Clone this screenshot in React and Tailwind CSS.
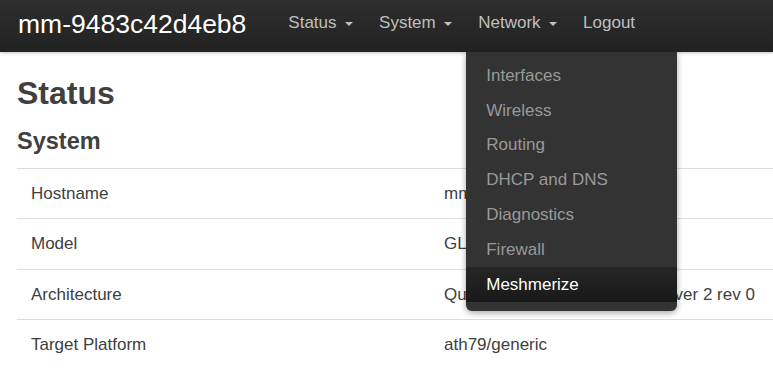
const font = { fontFamily: '"Liberation Sans", Arial, sans-serif' };

const navItems = [
  { label: "Status", caret: true },
  { label: "System", caret: true },
  { label: "Network", caret: true, open: true },
  { label: "Logout", caret: false },
];

const networkMenu = [
  "Interfaces",
  "Wireless",
  "Routing",
  "DHCP and DNS",
  "Diagnostics",
  "Firewall",
  "Meshmerize",
];

const rows = [
  ["Hostname", "mm-9483c42d4eb8"],
  ["Model", "GL.iNet GL-AR300M"],
  ["Architecture", "Qualcomm Atheros QCA956X ver 2 rev 0"],
  ["Target Platform", "ath79/generic"],
];

function Caret() {
  return (
    <span className="ml-[8px] mt-[3px] inline-block h-0 w-0 border-x-[4.5px] border-t-[4px] border-x-transparent border-t-[#bfbfbf]" />
  );
}

function Dropdown() {
  return (
    <div className="absolute left-0 top-full z-10 w-[211px] rounded-b-[6px] bg-[#333] pb-[9px] pt-[6px] shadow-[0_2px_6px_rgba(0,0,0,0.35)]">
      {networkMenu.map((item) => {
        const active = item === "Meshmerize";
        return (
          <div
            key={item}
            className={
              active
                ? "flex h-[34.9px] items-center bg-gradient-to-b from-[#262626] to-[#191919] px-[20px] text-white"
                : "flex h-[34.9px] items-center px-[20px] text-[#999]"
            }
          >
            {item}
          </div>
        );
      })}
    </div>
  );
}

export default function App() {
  return (
    <div
      className="h-[368px] w-[773px] overflow-hidden bg-white text-[17px] text-[#404040]"
      style={font}
    >
      <div className="flex h-[52px] items-center bg-gradient-to-b from-[#2e2e2e] to-[#222] shadow-[0_1px_3px_rgba(0,0,0,0.25)]">
        <div className="mb-[4px] ml-[18px] mr-[30px] text-[26.5px] leading-none text-white">
          mm-9483c42d4eb8
        </div>
        <div className="flex h-full">
          {navItems.map((n) => (
            <div
              key={n.label}
              className={
                n.caret
                  ? "relative flex h-full items-center pb-[7px] pl-[12px] pr-[14.5px] text-[#bfbfbf]"
                  : "relative flex h-full items-center pb-[7px] pl-[12px] pr-[12px] text-[#bfbfbf]"
              }
            >
              <span>{n.label}</span>
              {n.caret && <Caret />}
              {n.open && <Dropdown />}
            </div>
          ))}
        </div>
      </div>

      <div className="pl-[17px]">
        <h1 className="mt-[23px] text-[32px] font-bold leading-[36px]">Status</h1>
        <h3 className="mt-[16px] text-[23.5px] font-bold leading-[28px]">System</h3>
        <div className="mt-[13px] w-[800px]">
          {rows.map(([k, v]) => (
            <div
              key={k}
              className="grid h-[50.4px] grid-cols-[413px_1fr] items-center border-t border-[#ddd]"
            >
              <div className="px-[14px]">{k}</div>
              <div className="px-[14px]">{v}</div>
            </div>
          ))}
        </div>
      </div>
    </div>
  );
}
